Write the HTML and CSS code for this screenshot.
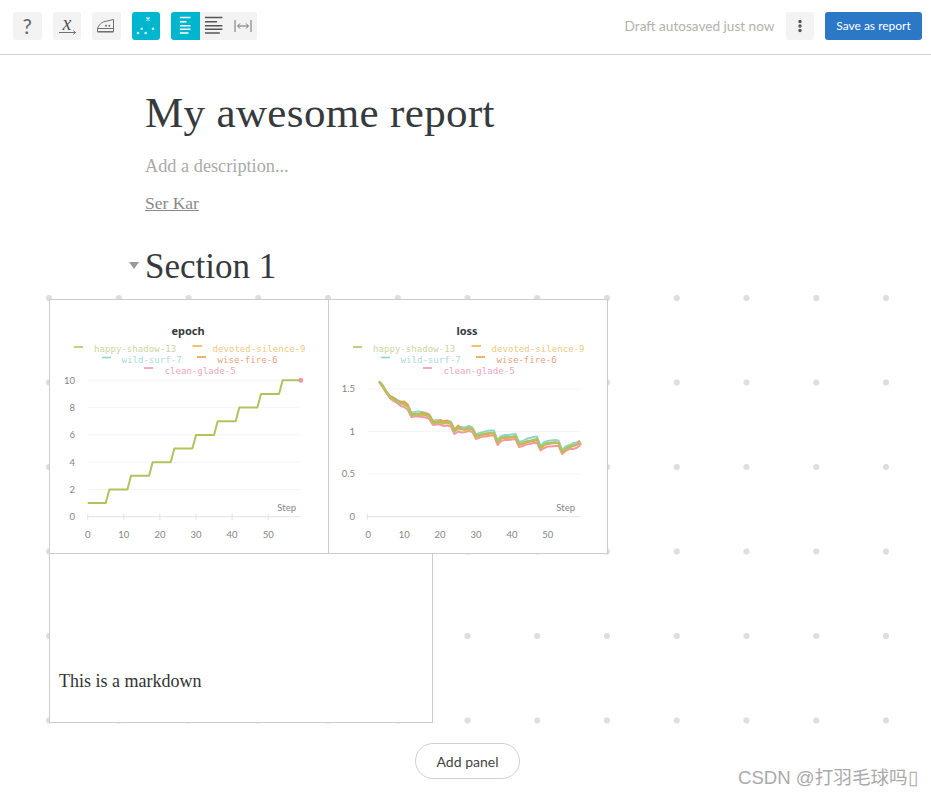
FILE: index.html
```html
<!DOCTYPE html>
<html lang="en">
<head>
    <meta charset="UTF-8">
    <meta name="viewport" content="width=device-width, initial-scale=1.0">
    <title>My awesome report</title>
    <link rel="stylesheet" href="styles.css">
</head>
<body>
    <header class="toolbar">
        <div class="toolbar-left">
            <button class="tool tool-help">?</button>
            <button class="tool">
                <svg width="28" height="28" viewBox="0 0 28 28">
                    <text x="14" y="17.8" class="var-x">x</text>
                    <path d="M6 20.5H22.5M20.3 18.7L22.5 20.5L20.3 22.3" class="ico-line"/>
                </svg>
            </button>
            <button class="tool">
                <svg width="28" height="28" viewBox="0 0 28 28">
                    <path d="M5.5 19.5V17C6.5 12.5 10 10 13 9.5L21.5 7.5V19.5Z" class="ico-line"/>
                    <path d="M5.5 16.5H21.5" class="ico-line"/>
                    <path d="M5.5 19.8H21.5" class="ico-sole"/>
                    <circle cx="14" cy="13.7" r="1" class="ico-dot"/>
                    <circle cx="17.3" cy="13.7" r="1" class="ico-dot"/>
                </svg>
            </button>
            <button class="tool tool-on">
                <svg width="28" height="28" viewBox="0 0 28 28">
                    <path d="M14.5 5.5L17.5 8.5M17.5 5.5L14.5 8.5" class="ico-white"/>
                    <circle cx="9.7" cy="16.7" r="1.3" class="ico-fill"/>
                    <circle cx="21" cy="16.7" r="1.3" class="ico-fill"/>
                    <circle cx="6" cy="21" r="1.3" class="ico-fill"/>
                    <circle cx="13.7" cy="21" r="1.3" class="ico-fill"/>
                </svg>
            </button>
            <div class="tool-group">
                <button class="tool tool-on">
                    <svg width="29" height="28" viewBox="0 0 29 28">
                        <path d="M9 5.3H19.7M9 9.7H15.7M9 13.7H19.7M9 17.3H19.7M9 21H17.7" class="ico-bars-white"/>
                    </svg>
                </button>
                <button class="tool">
                    <svg width="29" height="28" viewBox="0 0 29 28">
                        <path d="M5 5.3H22.7M5 9.7H17.3M5 13.7H22.7M5 17.3H22.7M5 21H20" class="ico-bars"/>
                    </svg>
                </button>
                <button class="tool">
                    <svg width="28" height="28" viewBox="0 0 28 28">
                        <path d="M6 8V20M22 8V20M9 14H19M11 11.5L8.5 14L11 16.5M17 11.5L19.5 14L17 16.5" class="ico-line"/>
                    </svg>
                </button>
            </div>
        </div>
        <div class="toolbar-right">
            <span class="autosave">Draft autosaved just now</span>
            <button class="tool">
                <svg width="28" height="28" viewBox="0 0 28 28">
                    <circle cx="14" cy="9.5" r="1.7" class="ico-dark"/>
                    <circle cx="14" cy="14" r="1.7" class="ico-dark"/>
                    <circle cx="14" cy="18.5" r="1.7" class="ico-dark"/>
                </svg>
            </button>
            <button class="save-btn">Save as report</button>
        </div>
    </header>

    <main>
        <div class="report-head">
            <h1>My awesome report</h1>
            <p class="description">Add a description...</p>
            <a class="author">Ser Kar</a>
            <h2><span class="caret"></span>Section 1</h2>
        </div>

        <section class="panel-grid">
            <div class="panel-row">
                <div class="panel">
                    <svg class="chart" width="278" height="253" viewBox="1 1 278 253">
                        <text x="139" y="36" class="chart-title">epoch</text>
                        <path d="M25 48H34" class="sw sw-happy"/><text x="45" y="53" class="lg lg-happy">happy-shadow-13</text>
                        <path d="M143.5 47H153" class="sw sw-devoted"/><text x="163.5" y="53" class="lg lg-devoted">devoted-silence-9</text>
                        <path d="M53 58.5H62" class="sw sw-wild"/><text x="72.5" y="63.5" class="lg lg-wild">wild-surf-7</text>
                        <path d="M148 58H157" class="sw sw-wise"/><text x="168.5" y="63.5" class="lg lg-wise">wise-fire-6</text>
                        <path d="M95 69H104" class="sw sw-clean"/><text x="115.5" y="74.5" class="lg lg-clean">clean-glade-5</text>

                        <path d="M38.7 81.3H251M38.7 108.6H251M38.7 135.9H251M38.7 163.2H251M38.7 190.5H251" class="grid"/>
                        <path d="M38.7 217.7H251M38.7 214.7V220.7M74.8 214.7V220.7M110.9 214.7V220.7M147 214.7V220.7M183.1 214.7V220.7M219.2 214.7V220.7" class="axis"/>

                        <text x="26" y="84.5" class="tick tick-y">10</text>
                        <text x="26" y="111.5" class="tick tick-y">8</text>
                        <text x="26" y="139" class="tick tick-y">6</text>
                        <text x="26" y="166.5" class="tick tick-y">4</text>
                        <text x="26" y="193.5" class="tick tick-y">2</text>
                        <text x="26" y="221" class="tick tick-y">0</text>
                        <text x="38.7" y="238.5" class="tick">0</text>
                        <text x="74.8" y="238.5" class="tick">10</text>
                        <text x="110.9" y="238.5" class="tick">20</text>
                        <text x="147" y="238.5" class="tick">30</text>
                        <text x="183.1" y="238.5" class="tick">40</text>
                        <text x="219.2" y="238.5" class="tick">50</text>
                        <text x="247" y="212" class="tick tick-end">Step</text>

                        <g transform="translate(38.7 0) scale(3.61 1)">
                            <polyline class="ln ln-happy" points="0,204 5,204 6,190.4 11,190.4 12,176.8 17,176.8 18,163.2 23,163.2 24,149.5 29,149.5 30,135.9 35,135.9 36,122.3 41,122.3 42,108.6 47,108.6 48,95 53,95 54,81.3 59,81.3"/>
                        </g>
                        <circle cx="251.7" cy="81.3" r="2.5" class="end-dot"/>
                    </svg>
                </div>
                <div class="panel panel-next">
                    <svg class="chart" width="278" height="253" viewBox="1 1 278 253">
                        <text x="139" y="36" class="chart-title">loss</text>
                        <path d="M25 48H34" class="sw sw-happy"/><text x="45" y="53" class="lg lg-happy">happy-shadow-13</text>
                        <path d="M143.5 47H153" class="sw sw-devoted"/><text x="163.5" y="53" class="lg lg-devoted">devoted-silence-9</text>
                        <path d="M53 58.5H62" class="sw sw-wild"/><text x="72.5" y="63.5" class="lg lg-wild">wild-surf-7</text>
                        <path d="M148 58H157" class="sw sw-wise"/><text x="168.5" y="63.5" class="lg lg-wise">wise-fire-6</text>
                        <path d="M95 69H104" class="sw sw-clean"/><text x="115.5" y="74.5" class="lg lg-clean">clean-glade-5</text>

                        <path d="M39.3 90H252M39.3 132.3H252M39.3 175H252" class="grid"/>
                        <path d="M39.3 217.7H252M39.3 214.7V220.7" class="axis"/>

                        <text x="27" y="93" class="tick tick-y">1.5</text>
                        <text x="27" y="135.5" class="tick tick-y">1</text>
                        <text x="27" y="178" class="tick tick-y">0.5</text>
                        <text x="27" y="221" class="tick tick-y">0</text>
                        <text x="40.3" y="238.5" class="tick">0</text>
                        <text x="76.2" y="238.5" class="tick">10</text>
                        <text x="112.1" y="238.5" class="tick">20</text>
                        <text x="148" y="238.5" class="tick">30</text>
                        <text x="183.9" y="238.5" class="tick">40</text>
                        <text x="219.8" y="238.5" class="tick">50</text>
                        <text x="247" y="212" class="tick tick-end">Step</text>

                        <g transform="translate(40.3 0) scale(3.59 1)">
                            <polyline class="ln ln-clean" points="3,83 4,88 5,94 6,99 7,102 8,104 9,107 10,108 11,111 12,118 13,117.5 14,117.5 15,118 16,118.5 17,120 18,126 19,125.5 20,125.5 21,127 22,126.5 23,127.5 24,135 25,132.5 26,133.5 27,133 28,132 29,133 30,140 31,138.5 32,137.5 33,137.5 34,136.5 35,136.5 36,146 37,142 38,141 39,141 40,140.5 41,140 42,148 43,147 44,145.5 45,145 46,144 47,144 48,151.5 49,149 50,147.5 51,147.5 52,147 53,147 54,155 55,152 56,150 57,150 58,149 59,146.5"/>
                            <polyline class="ln ln-wild" points="3,82 4,86 5,92 6,97 7,99 8,100.5 9,102.5 10,103.5 11,105.5 12,114 13,113 14,112.5 15,113 16,114 17,115.5 18,122 19,121 20,121.5 21,122.5 22,122 23,122.5 24,130 25,128 26,128 27,128.5 28,127 29,128.5 30,135.5 31,134 32,133 33,132 34,131.5 35,131.5 36,141 37,137 38,136 39,136 40,135.5 41,135 42,143 43,142 44,140 45,139 46,138 47,137.5 48,147 49,143 50,142 51,141.5 52,141 53,141.5 54,151 55,147.5 56,146 57,144 58,143.5 59,141.5"/>
                            <polyline class="ln ln-devoted" points="3,83 4,87 5,93 6,98.5 7,100.5 8,102 9,104.5 10,105.5 11,108 12,116.5 13,116 14,116 15,116 16,116.5 17,117.5 18,124.5 19,124 20,124 21,124.5 22,124 23,125 24,132.5 25,130 26,130.5 27,131 28,130 29,131 30,138 31,137 32,136 33,135 34,134.5 35,134.5 36,144 37,139.5 38,139 39,139 40,138.5 41,138 42,146 43,145 44,143.5 45,142.5 46,141.5 47,141 48,150 49,146 50,145 51,144.5 52,144 53,144.5 54,154 55,150 56,148.5 57,147 58,146 59,145"/>
                            <polyline class="ln ln-wise" points="3,82.5 4,87 5,92.5 6,97 7,98.5 8,102 9,103 10,102.5 11,106 12,115 13,115 14,115.5 15,114 16,114.5 17,116 18,122 19,123.5 20,121 21,122.5 22,121.5 23,124 24,131 25,126.5 26,130 27,130 28,128.5 29,130.5 30,136.5 31,136 32,135 33,135.5 34,134 35,134.5 36,143 37,139 38,138.5 39,138.5 40,138 41,138 42,145 43,144.5 44,143 45,142.5 46,142 47,141 48,149 49,145.5 50,144.5 51,144 52,143.5 53,144 54,153 55,150 56,148 57,146.5 58,146 59,142"/>
                            <polyline class="ln ln-happy" points="3,82.7 4,87 5,92.7 6,98.3 7,100.3 8,102 9,104.3 10,105.3 11,107.7 12,116 13,115 14,115 15,115.3 16,116 17,117 18,123.7 19,123 20,123 21,123.7 22,123.3 23,124.3 24,132 25,129.3 26,129.7 27,130 28,129 29,130 30,137 31,136 32,135 33,134.3 34,133.7 35,133.7 36,143 37,138.7 38,138 39,138 40,137.7 41,137 42,145 43,144 44,142.3 45,141.7 46,140.7 47,140 48,149 49,145.3 50,144 51,143.7 52,143.3 53,143.7 54,153 55,149.3 56,147.7 57,146.3 58,145.3 59,143.7"/>
                        </g>
                        <circle cx="252" cy="145" r="1.8" class="end-dot"/>
                    </svg>
                </div>
            </div>
            <div class="panel panel-markdown">
                <p>This is a markdown</p>
            </div>
        </section>

        <div class="add-row">
            <button class="add-panel">Add panel</button>
        </div>
    </main>

    <div class="watermark">CSDN @打羽毛球吗▯</div>
</body>
</html>
```

FILE: styles.css
```css
* {
    box-sizing: border-box;
}
body {
    margin: 0;
    height: 797px;
    overflow: hidden;
    background-color: #fff;
    color: #363a3d;
    font-family: "Open Sans", Arial, sans-serif;
}
button {
    font-family: inherit;
    border: none;
    padding: 0;
}

/* toolbar */
.toolbar {
    display: flex;
    justify-content: space-between;
    align-items: center;
    height: 55px;
    padding: 0 9px 3px 13px;
    border-bottom: 1px solid #d4d4d4;
}
.toolbar-left, .toolbar-right {
    display: flex;
    align-items: center;
}
.toolbar-left {
    gap: 11px;
}
.tool {
    display: flex;
    align-items: center;
    justify-content: center;
    width: 28.5px;
    height: 28px;
    border-radius: 3px;
    background-color: #f3f3f3;
    color: #666;
}
.tool-help {
    font-size: 21px;
    font-family: "Lato", sans-serif;
}
.tool-on {
    background-color: #00b6ce;
}
.tool-group {
    display: flex;
    border-radius: 3px;
    overflow: hidden;
}
.tool-group .tool {
    width: 28.67px;
    border-radius: 0;
}
.var-x {
    font-family: "Liberation Serif", serif;
    font-style: italic;
    font-size: 20px;
    text-anchor: middle;
    fill: #555;
}
.ico-line {
    fill: none;
    stroke: #707070;
    stroke-width: 1;
}
.ico-sole {
    fill: none;
    stroke: #707070;
    stroke-width: 1.5;
}
.ico-dot {
    fill: #707070;
}
.ico-dark {
    fill: #555;
}
.ico-white {
    fill: none;
    stroke: #fff;
    stroke-width: 1.2;
}
.ico-fill {
    fill: #cdf2f6;
}
.ico-bars {
    fill: none;
    stroke: #555;
    stroke-width: 1.5;
}
.ico-bars-white {
    fill: none;
    stroke: #fff;
    stroke-width: 1.5;
}
.autosave {
    font-family: "Lato", sans-serif;
    font-size: 13.6px;
    color: #b3b3aa;
    margin-right: 11px;
}
.save-btn {
    width: 97px;
    height: 28px;
    margin-left: 11px;
    border-radius: 3px;
    background-color: #2b78c7;
    color: #fff;
    font-family: "Lato", sans-serif;
    font-size: 12px;
}

/* report header */
.report-head {
    padding-left: 145px;
}
h1 {
    margin: 0;
    padding-top: 33px;
    font-family: "Liberation Serif", serif;
    font-weight: 400;
    font-size: 43px;
    letter-spacing: 0.35px;
    line-height: 50px;
    color: #363a3d;
}
.description {
    margin: 17px 0 0;
    font-family: "Liberation Serif", serif;
    font-size: 18.3px;
    line-height: 22px;
    color: #aaa;
}
.author {
    display: block;
    margin-top: 15px;
    font-family: "Liberation Serif", serif;
    font-size: 17.5px;
    line-height: 22px;
    color: #8a8a8a;
    text-decoration: underline;
}
h2 {
    position: relative;
    margin: 32px 0 0;
    font-family: "Liberation Serif", serif;
    font-weight: 400;
    font-size: 35px;
    line-height: 42px;
    color: #363a3d;
}
.caret {
    position: absolute;
    left: -16px;
    top: 16px;
    width: 0;
    height: 0;
    border-left: 5px solid transparent;
    border-right: 5px solid transparent;
    border-top: 7px solid #999;
}

/* panels */
.panel-grid {
    margin: 7px 0 0 46px;
    padding: 4px 0 0 3px;
    height: 430px;
    background-image: radial-gradient(circle at 3px 3px, #dedede 2.8px, transparent 3.3px);
    background-size: 69.75px 84.5px;
}
.panel-row {
    display: flex;
}
.panel {
    background-color: #fff;
    border: 1px solid #ccc;
    width: 280px;
    height: 255px;
}
.panel-next {
    margin-left: -1px;
}
.panel-markdown {
    display: flex;
    align-items: flex-end;
    width: 384px;
    height: 170px;
    margin-top: -1px;
    padding: 0 9px 30px;
}
.panel-markdown p {
    margin: 0;
    font-family: "Liberation Serif", serif;
    font-size: 18px;
    line-height: 22px;
    color: #333;
}
.chart {
    display: block;
}
.chart-title {
    font-family: "Noto Sans", sans-serif;
    font-weight: 700;
    font-size: 11px;
    fill: #363a3d;
    text-anchor: middle;
}
.lg {
    font-family: "DejaVu Sans Mono", monospace;
    font-size: 9.1px;
}
.lg-happy { fill: #ccd6a0; }
.lg-devoted { fill: #f0ca82; }
.lg-wild { fill: #a8dcd8; }
.lg-wise { fill: #ef9f7c; }
.lg-clean { fill: #eea6bd; }
.sw {
    fill: none;
    stroke-width: 1.6;
}
.sw-happy { stroke: #afc35f; }
.sw-devoted { stroke: #edb44c; }
.sw-wild { stroke: #90d6cd; }
.sw-wise { stroke: #ec9f45; }
.sw-clean { stroke: #ee9aa6; }
.grid {
    fill: none;
    stroke: #f4f4f4;
    stroke-width: 1;
}
.axis {
    fill: none;
    stroke: #e2e2e2;
    stroke-width: 1;
}
.tick {
    font-family: "Lato", sans-serif;
    font-size: 9.5px;
    fill: #858585;
    text-anchor: middle;
}
.tick-y, .tick-end {
    text-anchor: end;
}
.ln {
    fill: none;
    stroke-width: 2;
    stroke-linejoin: round;
    vector-effect: non-scaling-stroke;
}
.ln-happy { stroke: #afc35f; }
.ln-devoted { stroke: #edb44c; }
.ln-wild { stroke: #90d6cd; }
.ln-wise { stroke: #ec9f45; }
.ln-clean { stroke: #ee9aa6; }
.end-dot {
    fill: #ee9aa6;
}

/* footer button */
.add-row {
    display: flex;
    justify-content: center;
    margin: 18px 0 0 4px;
}
.add-panel {
    width: 105px;
    height: 36px;
    border: 1px solid #d0d0d0;
    border-radius: 18px;
    background-color: #fff;
    color: #444;
    font-family: "Lato", sans-serif;
    font-size: 14px;
}

.watermark {
    position: absolute;
    left: 738px;
    top: 766px;
    font-family: "Liberation Sans", "Noto Sans CJK SC", sans-serif;
    font-size: 18.6px;
    line-height: 24px;
    color: #aaa;
    white-space: nowrap;
}
```
